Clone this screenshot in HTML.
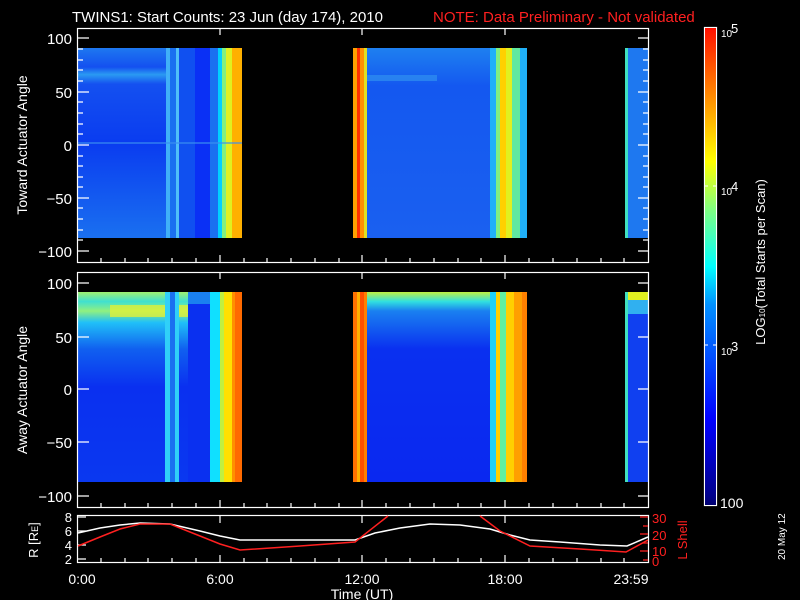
<!DOCTYPE html>
<html><head><meta charset="utf-8"><style>
html,body{margin:0;padding:0;background:#000;width:800px;height:600px;overflow:hidden}
svg{display:block}
text{font-family:"Liberation Sans",sans-serif;fill:#fff}
</style></head><body>
<svg width="800" height="600" viewBox="0 0 800 600" xmlns="http://www.w3.org/2000/svg">
<defs>
<linearGradient id="cb" x1="0" y1="1" x2="0" y2="0">
<stop offset="0" stop-color="#000070"/><stop offset="0.02" stop-color="#00008c"/>
<stop offset="0.18" stop-color="#0000ff"/><stop offset="0.42" stop-color="#0090ff"/>
<stop offset="0.5" stop-color="#00ffff"/><stop offset="0.62" stop-color="#80ff80"/>
<stop offset="0.72" stop-color="#ffff00"/><stop offset="0.85" stop-color="#ff9000"/>
<stop offset="1" stop-color="#ff1000"/></linearGradient>
<linearGradient id="bandT" x1="0" y1="0" x2="0" y2="1">
<stop offset="0" stop-color="#1e78f0"/><stop offset="0.1" stop-color="#1450f0"/><stop offset="0.14" stop-color="#2a9af2"/><stop offset="0.19" stop-color="#1450f0"/><stop offset="0.5" stop-color="#0a3cf0"/><stop offset="1" stop-color="#1a70f0"/></linearGradient>
<linearGradient id="bandB" x1="0" y1="0" x2="0" y2="1">
<stop offset="0" stop-color="#a0f070"/><stop offset="0.05" stop-color="#40e0d0"/><stop offset="0.1" stop-color="#90f080"/><stop offset="0.16" stop-color="#20c0f8"/><stop offset="0.3" stop-color="#1060f0"/><stop offset="0.5" stop-color="#0a30f0"/><stop offset="1" stop-color="#0a38f0"/></linearGradient>
<linearGradient id="bandB2" x1="0" y1="0" x2="0" y2="1">
<stop offset="0" stop-color="#c0f040"/><stop offset="0.05" stop-color="#30e0e0"/><stop offset="0.1" stop-color="#1a80f0"/><stop offset="0.3" stop-color="#0a30f0"/><stop offset="1" stop-color="#0a28f0"/></linearGradient>
<linearGradient id="band2" x1="0" y1="0" x2="0" y2="1">
<stop offset="0" stop-color="#1e80f0"/><stop offset="0.2" stop-color="#1458f0"/><stop offset="1" stop-color="#1a60f0"/></linearGradient>
</defs>

<text x="72" y="22" font-size="15">TWINS1: Start Counts: 23 Jun (day 174), 2010</text>
<text x="433" y="22" font-size="15" style="fill:#ff2020">NOTE: Data Preliminary - Not validated</text>

<!-- TOP PANEL DATA -->
<g>
<rect x="78" y="48" width="88" height="190" fill="url(#bandT)"/>
<rect x="166" y="48" width="4" height="190" fill="#40b0f8"/>
<rect x="170" y="48" width="6" height="190" fill="#1a70f0"/>
<rect x="176" y="48" width="3" height="190" fill="#50c0f8"/>
<rect x="179" y="48" width="16" height="190" fill="#1050f0"/>
<rect x="195" y="48" width="15" height="190" fill="#0a30f5"/>
<rect x="210" y="48" width="8" height="190" fill="#1a70f0"/>
<rect x="218" y="48" width="4" height="190" fill="#00d0ff"/>
<rect x="222" y="48" width="4" height="190" fill="#80f080"/>
<rect x="226" y="48" width="6" height="190" fill="#e0f020"/>
<rect x="232" y="48" width="10" height="190" fill="#ffb000"/>
<rect x="78" y="142" width="164" height="2" fill="#3a90f0" opacity="0.6"/>

<rect x="353" y="48" width="4" height="190" fill="#ffa000"/>
<rect x="357" y="48" width="3" height="190" fill="#ff3000"/>
<rect x="360" y="48" width="4" height="190" fill="#ff9000"/>
<rect x="364" y="48" width="3" height="190" fill="#e0e020"/>
<rect x="367" y="48" width="123" height="190" fill="url(#band2)"/>
<rect x="367" y="75" width="70" height="6" fill="#3090f0" opacity="0.7"/>
<rect x="490" y="48" width="6" height="190" fill="#20b0f8"/>
<rect x="496" y="48" width="4" height="190" fill="#80f080"/>
<rect x="500" y="48" width="6" height="190" fill="#ffd000"/>
<rect x="506" y="48" width="6" height="190" fill="#e0f020"/>
<rect x="512" y="48" width="8" height="190" fill="#60e8a0"/>
<rect x="520" y="48" width="7" height="190" fill="#20b0f8"/>

<rect x="625" y="48" width="3" height="190" fill="#40e0c0"/>
<rect x="628" y="48" width="20" height="190" fill="#1e78f0"/>
</g>

<!-- BOTTOM PANEL DATA -->
<g>
<rect x="78" y="292" width="110" height="190" fill="url(#bandB)"/>
<rect x="110" y="305" width="78" height="12" fill="#e8f030" opacity="0.75"/>
<rect x="165" y="292" width="5" height="190" fill="#30d0f8"/>
<rect x="170" y="292" width="5" height="190" fill="#1a70f0"/>
<rect x="175" y="292" width="4" height="190" fill="#30d0f8"/>
<rect x="188" y="292" width="22" height="190" fill="#0a30f0"/>
<rect x="188" y="292" width="22" height="12" fill="#1a80f0"/>
<rect x="210" y="292" width="10" height="190" fill="#10e0ff"/>
<rect x="220" y="292" width="4" height="190" fill="#c0f040"/>
<rect x="224" y="292" width="8" height="190" fill="#ffe000"/>
<rect x="232" y="292" width="10" height="190" fill="#ff9000"/>
<rect x="235" y="292" width="7" height="190" fill="#ff6a00"/>

<rect x="353" y="292" width="4" height="190" fill="#ff7000"/>
<rect x="357" y="292" width="3" height="190" fill="#ffb000"/>
<rect x="360" y="292" width="4" height="190" fill="#ff5000"/>
<rect x="364" y="292" width="3" height="190" fill="#ff8000"/>
<rect x="367" y="292" width="123" height="190" fill="url(#bandB2)"/>
<rect x="490" y="292" width="6" height="190" fill="#20d0f8"/>
<rect x="496" y="292" width="4" height="190" fill="#ffd000"/>
<rect x="500" y="292" width="6" height="190" fill="#60f0a0"/>
<rect x="506" y="292" width="8" height="190" fill="#ffd000"/>
<rect x="514" y="292" width="8" height="190" fill="#ffa000"/>
<rect x="522" y="292" width="5" height="190" fill="#ff8000"/>

<rect x="625" y="292" width="3" height="190" fill="#40e0c0"/>
<rect x="628" y="292" width="20" height="190" fill="#1040f0"/>
<rect x="628" y="292" width="20" height="8" fill="#e0f020"/>
<rect x="628" y="300" width="20" height="14" fill="#30b0f0"/>
</g>

<g fill="none" stroke="#fff" stroke-width="1.2">
<rect x="77.5" y="28.5" width="571" height="234"/>
<rect x="77.5" y="272.5" width="571" height="235"/>
<rect x="77.5" y="515.5" width="571" height="47"/>
<rect x="704.5" y="27.5" width="12" height="478"/>
</g>
<rect x="705" y="28" width="11" height="477" fill="url(#cb)"/>

<g stroke="#fff" stroke-width="1.2">
<path d="M78 38h11M78 92h11M78 145h11M78 198h11M78 251h11M638 38h10M638 92h10M638 145h10M638 198h10M638 251h10"/>
<path d="M78 283h11M78 337h11M78 389h11M78 442h11M78 496h11M638 283h10M638 337h10M638 389h10M638 442h10M638 496h10"/>
<path d="M78 49h5M78 60h5M78 70h5M78 81h5M78 102h5M78 113h5M78 124h5M78 134h5M78 156h5M78 166h5M78 177h5M78 187h5M78 208h5M78 219h5M78 230h5M78 240h5"/>
<path d="M643 49h5M643 60h5M643 70h5M643 81h5M643 102h5M643 113h5M643 124h5M643 134h5M643 156h5M643 166h5M643 177h5M643 187h5M643 208h5M643 219h5M643 230h5M643 240h5"/>
<path d="M220 28v7M362 28v7M505 28v7M220 262v-7M362 262v-7M505 262v-7M220 272v7M362 272v7M505 272v7M220 507v-7M362 507v-7M505 507v-7M220 516v7M362 516v7M505 516v7M220 562v-7M362 562v-7M505 562v-7"/>
<path d="M101 262v-4M125 262v-4M148 262v-4M172 262v-4M196 262v-4M244 262v-4M267 262v-4M291 262v-4M315 262v-4M339 262v-4M386 262v-4M410 262v-4M434 262v-4M458 262v-4M481 262v-4M529 262v-4M553 262v-4M577 262v-4M601 262v-4M624 262v-4"/>
<path d="M101 507v-4M125 507v-4M148 507v-4M172 507v-4M196 507v-4M244 507v-4M267 507v-4M291 507v-4M315 507v-4M339 507v-4M386 507v-4M410 507v-4M434 507v-4M458 507v-4M481 507v-4M529 507v-4M553 507v-4M577 507v-4M601 507v-4M624 507v-4"/>
<path d="M101 562v-4M125 562v-4M148 562v-4M172 562v-4M196 562v-4M244 562v-4M267 562v-4M291 562v-4M315 562v-4M339 562v-4M386 562v-4M410 562v-4M434 562v-4M458 562v-4M481 562v-4M529 562v-4M553 562v-4M577 562v-4M601 562v-4M624 562v-4"/>
<path d="M78 517h8M78 531h8M78 545h8M78 559h8"/>
</g>
<g stroke="#ff2020" stroke-width="1.2"><path d="M648 517h-8M648 526h-5M648 534h-8M648 543h-5M648 551h-8M648 560h-5"/></g>

<g font-size="15" text-anchor="end">
<text x="72" y="44">100</text><text x="72" y="98">50</text><text x="72" y="151">0</text><text x="72" y="204">−50</text><text x="72" y="257">−100</text>
<text x="72" y="289">100</text><text x="72" y="343">50</text><text x="72" y="395">0</text><text x="72" y="448">−50</text><text x="72" y="502">−100</text>
<text x="72" y="522" font-size="13">8</text><text x="72" y="536" font-size="13">6</text><text x="72" y="550" font-size="13">4</text><text x="72" y="564" font-size="13">2</text>
</g>
<g font-size="13">
<text x="652" y="523" style="fill:#ff2020">30</text><text x="652" y="540" style="fill:#ff2020">20</text><text x="652" y="556" style="fill:#ff2020">10</text><text x="652" y="566" style="fill:#ff2020">0</text>
</g>
<text transform="translate(27,145) rotate(-90)" font-size="14" text-anchor="middle">Toward Actuator Angle</text>
<text transform="translate(27,390) rotate(-90)" font-size="14" text-anchor="middle">Away Actuator Angle</text>
<text transform="translate(38,540) rotate(-90)" font-size="13" text-anchor="middle">R [R<tspan font-size="9">E</tspan>]</text>
<text transform="translate(687,540) rotate(-90)" font-size="13" text-anchor="middle" style="fill:#ff2020">L Shell</text>

<g font-size="10"><text x="721" y="37">10</text><text x="731" y="33" font-size="13">5</text>
<text x="721" y="195">10</text><text x="731" y="191" font-size="13">4</text>
<text x="721" y="355">10</text><text x="731" y="351" font-size="13">3</text></g>
<text x="720" y="508" font-size="14">100</text>
<g stroke="#fff"><path d="M705 186h3M713 186h3M705 345h3M713 345h3"/></g>
<text transform="translate(765,262) rotate(-90)" font-size="13" text-anchor="middle">LOG<tspan font-size="8">10</tspan>(Total Starts per Scan)</text>
<text transform="translate(785,560) rotate(-90)" font-size="10" text-anchor="start">20 May 12</text>

<polyline fill="none" stroke="#fff" stroke-width="1.5" points="78,533 100,528 120,525 140,523 170,524 200,531 220,536 240,540 355,540 375,533 400,528 430,524 460,525 490,529 510,535 530,540 560,542 600,545 627,546 648,537"/>
<polyline fill="none" stroke="#ff2020" stroke-width="1.5" points="78,546 100,537 120,529 140,524 170,524 200,536 220,544 240,550 300,546 355,542 388,516"/>
<polyline fill="none" stroke="#ff2020" stroke-width="1.5" points="480,516 500,531 530,546 580,549 626,552 648,540"/>

<g font-size="14" text-anchor="middle">
<text x="82" y="584">0:00</text><text x="220" y="584">6:00</text><text x="362" y="584">12:00</text><text x="505" y="584">18:00</text><text x="631" y="584">23:59</text>
<text x="362" y="599">Time (UT)</text></g>
</svg>
</body></html>
